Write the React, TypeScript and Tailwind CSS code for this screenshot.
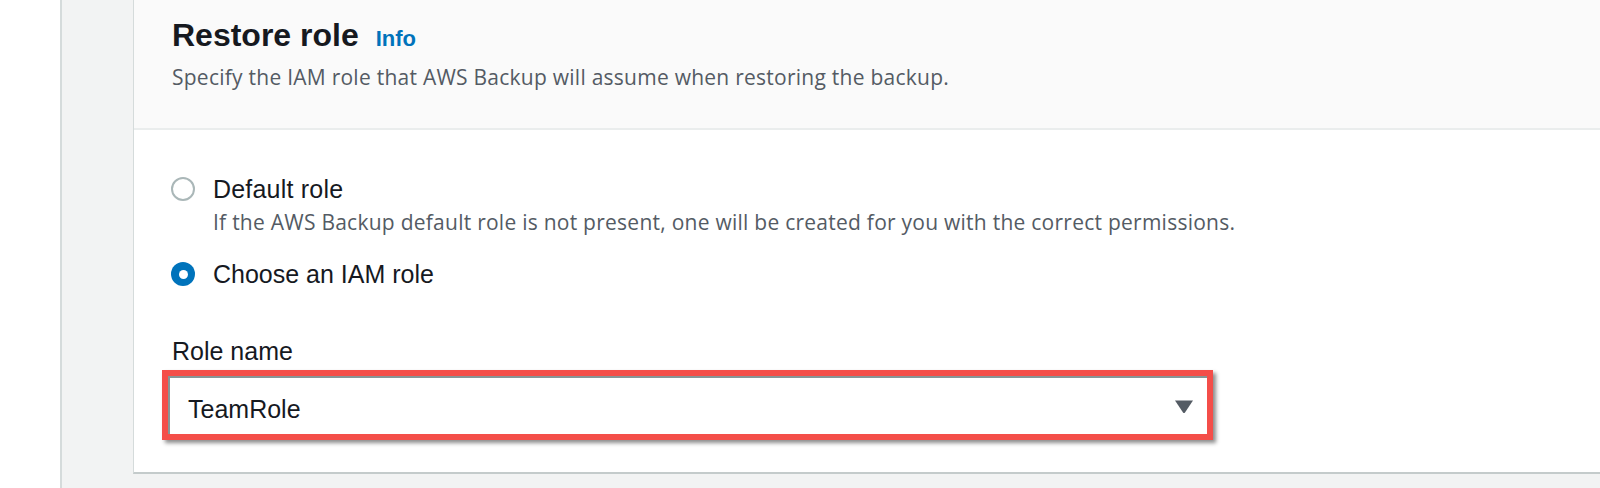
import React from "react";

const Radio = ({ checked }: { checked?: boolean }) => {
  if (checked) {
    return (
      <span className="mt-[4px] flex h-[24px] w-[24px] shrink-0 items-center justify-center rounded-full bg-[#0073bb]">
        <span className="h-[9px] w-[9px] rounded-full bg-white" />
      </span>
    );
  }
  return (
    <span className="mt-[4px] h-[24px] w-[24px] shrink-0 rounded-full border-[2px] border-[#aab7b8] bg-white" />
  );
};

const App: React.FC = () => {
  return (
    <div className="flex h-[488px] w-[1600px] overflow-hidden bg-white font-['Liberation_Sans',Arial,sans-serif]">
      {/* side nav edge */}
      <div className="w-[62px] shrink-0 border-r-2 border-[#d5dbdb] bg-white" />

      <div className="flex flex-1 bg-[#f2f3f3] pb-[14px] pl-[71px]">
        <section className="flex flex-1 flex-col border-b-2 border-l border-[#c4cbcb] border-l-[#d5dbdb] bg-white">
          {/* Header */}
          <header className="h-[130px] border-b-2 border-[#eaeded] bg-[#fafafa] pl-[38px] pt-[15px]">
            <div className="flex items-baseline gap-[17px]">
              <h2 className="text-[32px] leading-[40px] font-bold text-[#16191f]">
                Restore role
              </h2>
              <a className="text-[22px] leading-[28px] font-bold text-[#0073bb]">
                Info
              </a>
            </div>
            <p className="mt-[8px] font-['Open_Sans',Arial,sans-serif] text-[21px] leading-[28px] tracking-[0.25px] text-[#545b64]">
              Specify the IAM role that AWS Backup will assume when restoring the
              backup.
            </p>
          </header>

          {/* Body */}
          <div className="flex-1 pl-[37px] pt-[43px]">
            <div className="flex gap-[18px]">
              <Radio />
              <div>
                <div className="text-[25px] leading-[32px] tracking-[0.2px] text-[#16191f]">
                  Default role
                </div>
                <div className="mt-[3px] font-['Open_Sans',Arial,sans-serif] text-[21px] leading-[28px] tracking-[0.25px] text-[#545b64]">
                  If the AWS Backup default role is not present, one will be
                  created for you with the correct permissions.
                </div>
              </div>
            </div>

            <div className="mt-[22px] flex gap-[18px]">
              <Radio checked />
              <div className="text-[25px] leading-[32px] text-[#16191f]">
                Choose an IAM role
              </div>
            </div>

            <div className="mt-[45px] pl-[1px] text-[25px] leading-[32px] text-[#16191f]">
              Role name
            </div>

            <div className="-ml-[9px] mt-[3px] w-[1051px] border-[6px] border-[#f44e49] shadow-[3px_3px_4px_rgba(0,0,0,0.45)]">
              <div className="flex h-[58px] items-start justify-between pl-[20px] pr-[13px] pt-[17px] shadow-[inset_2px_2px_0_#879596]">
                <span className="text-[25px] leading-[32px] text-[#16191f]">
                  TeamRole
                </span>
                <svg width="20" height="15" viewBox="0 0 20 15" className="mt-[6px]">
                  <path d="M1 1.5 H19 L11 13.5 Q10 14.5 9 13.5 Z" fill="#545b64" />
                </svg>
              </div>
            </div>
          </div>
        </section>
      </div>
    </div>
  );
};

export default App;
